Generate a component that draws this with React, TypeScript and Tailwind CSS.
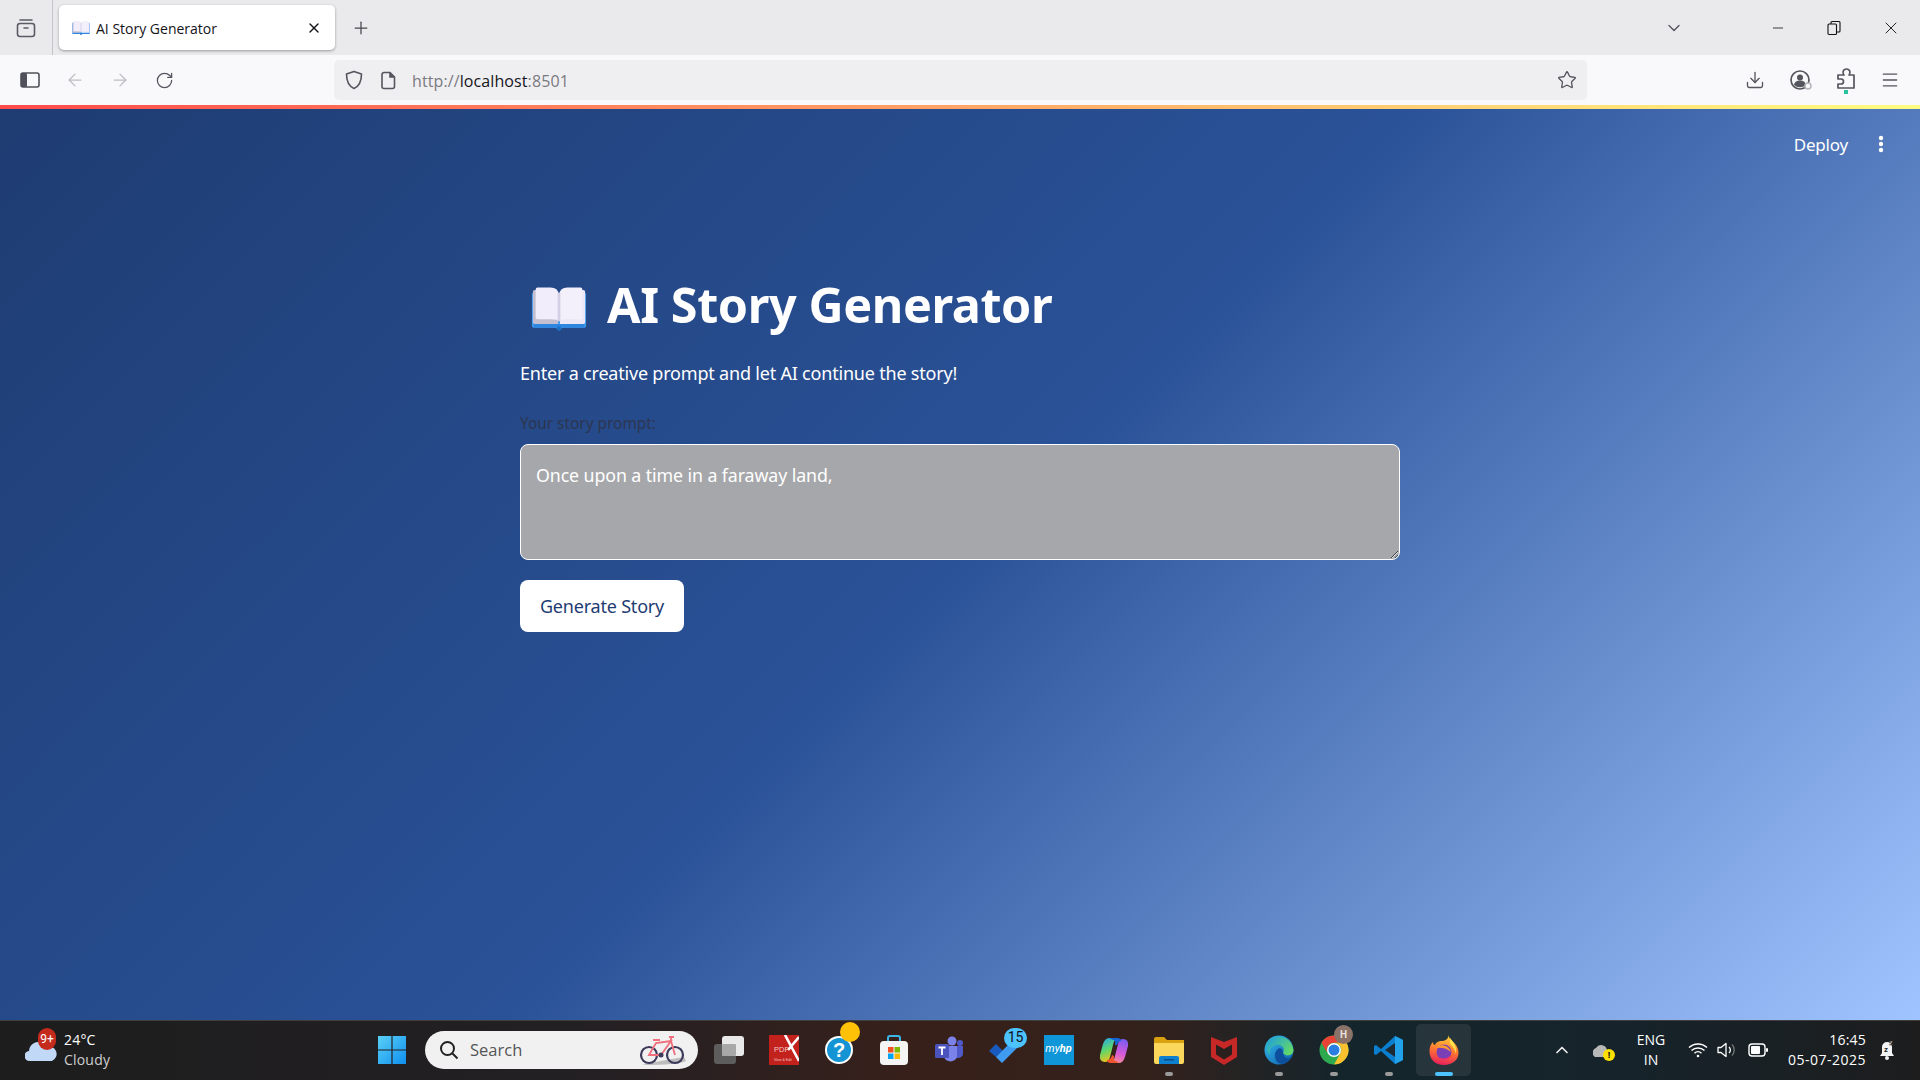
import { ArrowLeft, ArrowRight, ChevronDown, ChevronUp, Download, Minus, Plus, RotateCw, Star, X, Menu } from "lucide-react";

const ui = "font-['Open_Sans','Liberation_Sans',sans-serif]";

function BookEmoji({ size, className }: { size: number; className?: string }) {
  return (
    <svg width={size} height={size} viewBox="0 0 60 60" className={className}>
      <path d="M1 13 H59 V48 a2 2 0 0 1-2 2 H35 l-3 1 a3 3 0 0 1-4 0 l-3-1 H3 a2 2 0 0 1-2-2Z" fill="#3f9bf0" />
      <path d="M3 46 H57 V50 H3Z" fill="#2f86e0" />
      <path d="M3 10 q-1 0-1 2 V44 q0 2 2 2 H29 V14 q-2-5-8-5 H8Z" fill="#c3bfd0" />
      <path d="M57 10 q1 0 1 2 V44 q0 2-2 2 H31 V14 q2-5 8-5 h13Z" fill="#ebe7f6" />
      <path d="M7 7 h14 q8 0 9 8 V43 q-2-2-8-2 H7 q-2 0-2-2 V9 q0-2 2-2Z" fill="#f1edfa" />
      <path d="M53 7 H39 q-8 0-9 8 V43 q2-2 8-2 H53 q2 0 2-2 V9 q0-2-2-2Z" fill="#f3f0fb" />
      <path d="M30 13 V43" stroke="#d5cfe6" strokeWidth="3" />
      <circle cx="30" cy="51" r="2.5" fill="#1f6fc4" />
    </svg>
  );
}

function Tabs() {
  return (
    <div className="h-[55px] bg-[#eaeaed] flex items-center text-[#15141a]">
      <div className="w-[53px] h-full flex items-center justify-center border-r border-[#c4c4c8]">
        <svg width="20" height="20" viewBox="0 0 20 20" fill="none" stroke="#5b5b66" strokeWidth="1.6">
          <rect x="1.5" y="5.5" width="17" height="13" rx="2.5" />
          <path d="M4 2 H16 M8 10 H12" strokeLinecap="round" />
        </svg>
      </div>
      <div className="ml-[6px] w-[276px] h-[45px] bg-white rounded-[5px] shadow-[0_1px_3px_rgba(0,0,0,0.35)] flex items-center pl-[13px] pr-[13px]">
        <BookEmoji size={18} />
        <span className={`ml-[6px] pt-[1px] flex-1 text-[14px] ${ui}`}>AI Story Generator</span>
        <X size={16} strokeWidth={2} />
      </div>
      <div className="w-[52px] flex justify-center">
        <Plus size={20} strokeWidth={1.5} color="#45454d" />
      </div>
      <div className="ml-auto flex items-center">
        <ChevronDown size={20} strokeWidth={1.6} color="#55555e" />
        <div className="w-[86px]" />
        <Minus size={16} strokeWidth={1.2} color="#111" />
        <div className="w-[41px]" />
        <svg width="14" height="16" viewBox="0 0 14 16" fill="none" stroke="#111" strokeWidth="1.1">
          <rect x="1" y="4" width="8.5" height="10.5" rx="1" />
          <path d="M4 4 V2.5 q0-1 1-1 H12 q1 0 1 1 V11 q0 1-1 1 H9.5" />
        </svg>
        <div className="w-[40px]" />
        <X size={20} strokeWidth={1.1} color="#111" />
        <div className="w-[19px]" />
      </div>
    </div>
  );
}

function Toolbar() {
  return (
    <div className="h-[50px] bg-[#f9f9fb] flex items-center">
      <div className="flex items-center w-[334px] pl-[20px]">
        <svg width="20" height="20" viewBox="0 0 20 20" fill="none">
          <rect x="1" y="3" width="18" height="14" rx="2" stroke="#50505a" strokeWidth="1.6" />
          <rect x="1" y="3" width="6" height="14" rx="1.5" fill="#50505a" />
        </svg>
        <ArrowLeft size={20} strokeWidth={1.5} color="#bdbdc2" className="ml-[25px]" />
        <ArrowRight size={20} strokeWidth={1.5} color="#bdbdc2" className="ml-[25px]" />
        <RotateCw size={19} strokeWidth={1.6} color="#55555e" className="ml-[25px]" />
      </div>
      <div className="w-[1253px] h-[40px] bg-[#efeff2] rounded-[5px] flex items-center pl-[11px] pr-[10px]">
        <svg width="18" height="20" viewBox="0 0 18 20" fill="none" stroke="#55555e" strokeWidth="1.6">
          <path d="M9 1.5 L16.5 4 C16.5 11 14.5 16 9 18.5 C3.5 16 1.5 11 1.5 4Z" strokeLinejoin="round" />
        </svg>
        <svg width="15" height="19" viewBox="0 0 15 19" fill="none" stroke="#55555e" strokeWidth="1.6" className="ml-[18px]">
          <path d="M3 1.5 H9 L13.5 6 V15.5 a2 2 0 0 1-2 2 H3 a2 2 0 0 1-2-2 V3.5 a2 2 0 0 1 2-2Z" />
          <path d="M9 1.5 V6 H13.5" fill="#55555e" />
        </svg>
        <span className={`ml-[16px] pt-[2px] flex-1 text-[16px] tracking-[0.1px] text-[#7a7a80] ${ui}`}>
          http://<span className="text-[#15141a]">localhost</span>:8501
        </span>
        <Star size={20} strokeWidth={1.6} color="#55555e" />
      </div>
      <div className="flex-1 flex items-center pl-[158px]">
        <Download size={20} strokeWidth={1.6} color="#55555e" />
        <div className="w-[24px]" />
        <svg width="24" height="24" viewBox="0 0 24 24" fill="none">
          <circle cx="11" cy="12" r="9" stroke="#55555e" strokeWidth="1.7" />
          <circle cx="11" cy="9.5" r="3" fill="#55555e" />
          <path d="M5 17 a6 4.5 0 0 1 12 0 a9 9 0 0 1-12 0Z" fill="#55555e" />
          <circle cx="19" cy="18" r="3" fill="#f9f9fb" stroke="#b5b5ba" strokeWidth="1.5" />
        </svg>
        <div className="w-[23px]" />
        <div className="flex flex-col items-center">
          <svg width="20" height="23" viewBox="0 0 20 23" fill="none" stroke="#55555e" strokeWidth="1.7">
            <path d="M2 9 H8 c-2-2-1-6 2.500-6 c3.500 0 4.500 4 2.500 6 H18 V22 H2 V18 h3 a2.500 2.500 0 0 0 0-5 h-3Z" strokeLinejoin="round" />
          </svg>
          <div className="w-[4px] h-[4px] bg-[#2ac3a2] mt-[1px]" />
        </div>
        <div className="w-[24px]" />
        <Menu size={20} strokeWidth={1.6} color="#55555e" />
      </div>
    </div>
  );
}

function Page() {
  return (
    <div className="relative flex-1 bg-[linear-gradient(135deg,#1e3c72_0%,#2a5298_50%,#a0c4ff_100%)] font-['Noto_Sans',sans-serif]">
      <div className="h-[4px] bg-[linear-gradient(90deg,#ff4b4b,#fffd80)]" />
      <div className="absolute top-[26px] right-[36px] flex items-center text-white">
        <span className="pt-[1px] text-[17px] tracking-[-0.2px]">Deploy</span>
        <svg width="6" height="18" viewBox="0 0 6 18" className="ml-[30px]" fill="#fff">
          <circle cx="3" cy="3" r="2.2" />
          <circle cx="3" cy="9" r="2.2" />
          <circle cx="3" cy="15" r="2.2" />
        </svg>
      </div>
      <div className="mx-auto w-[880px] flex flex-col pt-[162px]">
        <div className="flex items-center h-[68px] pl-[11px]">
          <BookEmoji size={56} className="mt-[7px]" />
          <h1 className="ml-[20px] pb-[2px] text-[48.5px] font-bold text-white tracking-[-0.4px] leading-none">AI Story Generator</h1>
        </div>
        <p className="mt-[19px] text-[18px] text-white leading-[30px] tracking-[-0.2px]">Enter a creative prompt and let AI continue the story!</p>
        <label className="mt-[25px] text-[15.4px] text-[#2c3650] leading-[22px]">Your story prompt:</label>
        <textarea
          readOnly
          defaultValue="Once upon a time in a faraway land,"
          className="mt-[9px] h-[116px] rounded-[8px] border border-white bg-[#a6a7aa] px-[15px] py-[18px] text-[17.8px] leading-[24px] text-white tracking-[-0.1px] outline-none"
        />
        <button className="mt-[20px] w-[164px] h-[52px] bg-white rounded-[8px] text-[18px] text-[#1e3c72] tracking-[-0.2px]">Generate Story</button>
      </div>
    </div>
  );
}

function Pip({ active }: { active?: boolean }) {
  return <div className={active ? "w-[18px] h-[4px] rounded bg-[#4cc2ff]" : "w-[8px] h-[4px] rounded bg-[#9a9a9a]"} />;
}

function Slot({ children, pip, active }: { children: React.ReactNode; pip?: boolean; active?: boolean }) {
  return (
    <div className={`relative w-[55px] h-[52px] flex items-center justify-center rounded-[5px] ${active ? "bg-[#ffffff14]" : ""}`}>
      {children}
      {(pip || active) && (
        <div className="absolute bottom-[0px] left-0 right-0 flex justify-center">
          <Pip active={active} />
        </div>
      )}
    </div>
  );
}

function Badge({ className, children }: { className: string; children?: React.ReactNode }) {
  return <div className={`absolute rounded-full flex items-center justify-center ${className}`}>{children}</div>;
}

function TaskIcons() {
  return (
    <div className="flex items-center">
      <Slot>
        <svg width="32" height="32" viewBox="0 0 32 32">
          <rect x="1" y="10" width="22" height="20" rx="3" fill="#5d5d5d" />
          <rect x="9" y="2" width="22" height="20" rx="3" fill="#e9e9e9" />
          <rect x="9" y="10" width="14" height="12" rx="1" fill="#a8a8a8" />
        </svg>
      </Slot>
      <Slot>
        <svg width="30" height="30" viewBox="0 0 30 30">
          <rect width="30" height="30" fill="#c2211c" />
          <path d="M16 0 L30 26 M30 2 L19 15" stroke="#fff" strokeWidth="2.6" fill="none" />
          <text x="5" y="17" fontSize="7.5" fill="#f2c9c7" fontFamily="Liberation Sans">PDF</text>
          <text x="5" y="26" fontSize="3.5" fill="#f2c9c7" fontFamily="Liberation Sans">View & Edit</text>
        </svg>
      </Slot>
      <Slot>
        <svg width="30" height="30" viewBox="0 0 30 30">
          <circle cx="15" cy="15" r="14" fill="#fff" />
          <circle cx="15" cy="15" r="12" fill="#1494d4" />
          <text x="15" y="22" textAnchor="middle" fontSize="20" fontWeight="700" fill="#fff" fontFamily="Liberation Sans">?</text>
        </svg>
        <Badge className="top-[-2px] left-[29px] w-[20px] h-[20px] bg-[#ffc107]" />
      </Slot>
      <Slot>
        <svg width="30" height="30" viewBox="0 0 30 30">
          <path d="M9 7 V3 q0-2 2-2 H19 q2 0 2 2 V7" stroke="#3cb4e8" strokeWidth="2" fill="none" />
          <rect x="1" y="6" width="28" height="24" rx="4" fill="#f4f4f4" />
          <rect x="9" y="12" width="5.5" height="5.5" fill="#f25022" />
          <rect x="15.5" y="12" width="5.5" height="5.5" fill="#7fba00" />
          <rect x="9" y="18.5" width="5.5" height="5.5" fill="#00a4ef" />
          <rect x="15.5" y="18.5" width="5.5" height="5.5" fill="#ffb900" />
        </svg>
      </Slot>
      <Slot>
        <svg width="30" height="30" viewBox="0 0 30 30">
          <circle cx="18" cy="6" r="4.5" fill="#7b83eb" />
          <circle cx="26" cy="8" r="3" fill="#5059c9" />
          <path d="M21 11 H29 V19 a5 5 0 0 1-8 3Z" fill="#5059c9" />
          <path d="M10 11 H23 V22 a7 7 0 0 1-13 0Z" fill="#7b83eb" />
          <rect x="1" y="9" width="14" height="14" rx="1.5" fill="#4b53bc" />
          <path d="M4.5 12.5 H11.5 M8 12.5 V20" stroke="#fff" strokeWidth="1.8" />
        </svg>
      </Slot>
      <Slot>
        <svg width="32" height="30" viewBox="0 0 32 30">
          <path d="M1 16 L8 9 L15 16 L8 22Z" fill="#185abd" />
          <path d="M8 22 L25 5 L31 11 L14 28 Z" fill="#3f9bf0" />
        </svg>
        <Badge className="top-[4px] left-[28px] w-[23px] h-[20px] bg-[#4cc2ff] text-[14px] text-[#111] font-['Roboto',sans-serif]">15</Badge>
      </Slot>
      <Slot>
        <div className="w-[30px] h-[30px] bg-[#0e96d8] flex items-center justify-center text-white text-[11px] italic font-['Roboto',sans-serif]">
          my<b>hp</b>
        </div>
      </Slot>
      <Slot>
        <svg width="30" height="28" viewBox="0 0 30 28">
          <defs>
            <linearGradient id="cpa" x1="0.2" y1="0" x2="0.5" y2="1">
              <stop offset="0" stopColor="#27a8e8" />
              <stop offset="0.5" stopColor="#5fd66c" />
              <stop offset="1" stopColor="#f5c419" />
            </linearGradient>
            <linearGradient id="cpb" x1="0.6" y1="0" x2="0.4" y2="1">
              <stop offset="0" stopColor="#7a5bf0" />
              <stop offset="0.6" stopColor="#d85ad8" />
              <stop offset="1" stopColor="#f08a9a" />
            </linearGradient>
          </defs>
          <path d="M10 2 H18 Q15 4 14 9 L11 21 Q10 26 6 26 Q0 26 1 19 L4 8 Q6 2 10 2Z" fill="url(#cpa)" />
          <path d="M20 27 H12 Q15 25 16 20 L19 8 Q20 3 24 3 Q30 3 29 10 L26 21 Q24 27 20 27Z" fill="url(#cpb)" />
          <path d="M10 2 H18 Q22 2 22 5 Q19 5 18 9 L16 9 Q17 4 14 4Z" fill="#1565d8" />
          <path d="M20 27 H12 Q8 27 8 24 Q12 24 13 19 L15 20 Q14 25 17 25Z" fill="#f0562d" />
        </svg>
      </Slot>
      <Slot pip>
        <svg width="30" height="28" viewBox="0 0 30 28">
          <path d="M0 3 q0-2 2-2 H10 L13 4 H30 V10 H0Z" fill="#d9a00f" />
          <path d="M0 7 H30 V26 q0 2-2 2 H2 q-2 0-2-2Z" fill="#fbd75b" />
          <path d="M5 28 V22 q0-2 2-2 H23 q2 0 2 2 V28Z" fill="#0f7fd0" />
          <rect x="10" y="23" width="10" height="1.5" fill="#0a4f8a" />
        </svg>
      </Slot>
      <Slot>
        <svg width="26" height="30" viewBox="0 0 26 30">
          <path d="M0 2 L13 7 L26 2 V22 L13 30 L0 22Z" fill="#c62828" />
          <path d="M5 9.500 L13 14 L21 9.500 V19.500 L13 24.500 L5 19.500Z" fill="#2a1f1c" />
        </svg>
      </Slot>
      <Slot pip>
        <svg width="30" height="30" viewBox="0 0 30 30">
          <defs>
            <linearGradient id="eda" x1="0" y1="0" x2="1" y2="1">
              <stop offset="0" stopColor="#35c1f1" />
              <stop offset="1" stopColor="#0c59a4" />
            </linearGradient>
            <linearGradient id="edb" x1="0" y1="0" x2="1" y2="0.6">
              <stop offset="0" stopColor="#1b9de2" />
              <stop offset="1" stopColor="#62d66b" />
            </linearGradient>
          </defs>
          <circle cx="15" cy="15" r="14.5" fill="url(#eda)" />
          <path d="M2 9 C7 -1 27 -2 29.500 15 C29.500 21 22 22 19 18 C22 13 17 9 12 10 C7 11 5 15 6 20 C3 17 2 12 2 9Z" fill="url(#edb)" />
          <path d="M13 15 C15 12 19 13 19 18 C20 24 25 25 28 21 C24 30 15 31 12 25 C10 21 11 17 13 15Z" fill="#0d4f9c" />
        </svg>
      </Slot>
      <Slot pip>
        <svg width="30" height="30" viewBox="0 0 30 30">
          <circle cx="15" cy="15" r="14.5" fill="#2da94f" />
          <path d="M2.440 7.750 A14.500 14.500 0 0 1 27.560 7.750 H15 A7.250 7.250 0 0 0 8.720 18.620Z" fill="#ea4335" />
          <path d="M27.560 7.750 A14.500 14.500 0 0 1 15 29.500 L21.280 18.620 A7.250 7.250 0 0 0 15 7.750Z" fill="#fbc02d" />
          <circle cx="15" cy="15" r="7" fill="#fff" />
          <circle cx="15" cy="15" r="5.500" fill="#2a7de1" />
        </svg>
        <Badge className="top-[1px] left-[28px] w-[19px] h-[19px] bg-[#8a7268] text-[10px] font-bold text-[#e8e0dc] font-['Roboto',sans-serif]">H</Badge>
      </Slot>
      <Slot pip>
        <svg width="30" height="30" viewBox="0 0 30 30">
          <path d="M21 1 L29 5 V25 L21 29 L7 16 L2 20 L0 19 V11 L2 10 L7 14Z" fill="#0a7fd0" />
          <path d="M21 1 L29 5 V25 L21 29Z" fill="#22a2ea" />
          <path d="M21 8 L11 15 L21 22Z" fill="#1d2a33" />
        </svg>
      </Slot>
      <Slot active>
        <svg width="30" height="32" viewBox="0 0 30 32">
          <defs>
            <linearGradient id="ffa" x1="0.6" y1="0" x2="0.4" y2="1">
              <stop offset="0" stopColor="#ffd43b" />
              <stop offset="0.5" stopColor="#ff7a2f" />
              <stop offset="1" stopColor="#e8205c" />
            </linearGradient>
          </defs>
          <path d="M19 1 C20 6 29 9 29.500 18 C30 26 23 31 15 31 C6 31 0 25 0.500 16 C1 12 2 10 4 8 C4 10 5 11 6 11 C7 8 10 7 12 7 C16 7 20 5 19 1Z" fill="url(#ffa)" />
          <path d="M21 4 C24 8 28 12 27 20 C26 16 24 12 21 10Z" fill="#ffe14d" />
          <circle cx="15" cy="18" r="7.500" fill="#7b3fb5" />
          <path d="M7 14 C11 9 20 11 22 18 C18 14 12 13 7 14Z" fill="#ff9a2f" />
          <path d="M8 22 C11 25 17 26 22 21 C20 28 10 28 8 22Z" fill="#f0336a" />
        </svg>
      </Slot>
    </div>
  );
}

function Tray() {
  return (
    <div className="flex items-center text-white h-full">
      <ChevronUp size={20} strokeWidth={2} color="#eee" />
      <div className="relative w-[20px] h-[18px] ml-[21px]">
        <svg width="20" height="18" viewBox="0 0 20 18">
          <path d="M2 16 a5 5 0 0 1 1-9 a6 6 0 0 1 11 2 a4 4 0 0 1-1 7Z" fill="#b8b8b8" />
        </svg>
        <div className="absolute -right-[2px] -bottom-[2px] w-[12px] h-[12px] rounded-full bg-[#fce100] text-[#111] text-[9px] font-bold flex items-center justify-center">!</div>
      </div>
      <div className={`ml-[21px] pt-[1px] w-[34px] text-center text-[14px] leading-[20px] ${ui}`}>
        <div>ENG</div>
        <div>IN</div>
      </div>
      <svg width="20" height="16" viewBox="0 0 20 16" fill="none" stroke="#fff" strokeWidth="1.5" className="ml-[20px]">
        <path d="M1 5.500 a13 13 0 0 1 18 0 M3.500 8.500 a9.500 9.500 0 0 1 13 0 M6.500 11.200 a5 5 0 0 1 7 0" />
        <circle cx="10" cy="14" r="1.300" fill="#fff" stroke="none" />
      </svg>
      <svg width="20" height="18" viewBox="0 0 20 18" fill="none" stroke="#fff" strokeWidth="1.3" className="ml-[9px]">
        <path d="M1 6.500 H4 L9 2.500 V15.500 L4 11.500 H1Z" strokeLinejoin="round" />
        <path d="M12 6 a4 4 0 0 1 0 6" />
        <path d="M15 3.500 a8 8 0 0 1 0 11" stroke="#777" />
      </svg>
      <svg width="20" height="14" viewBox="0 0 20 14" fill="none" className="ml-[11px]">
        <rect x="1" y="1" width="16" height="12" rx="3" stroke="#fff" strokeWidth="1.4" />
        <rect x="3" y="3" width="9" height="8" rx="1" fill="#fff" />
        <rect x="18" y="5" width="2" height="4" rx="1" fill="#fff" />
      </svg>
      <div className={`ml-[14px] w-[84px] text-right text-[14px] leading-[20px] ${ui}`}>
        <div className="tracking-[0.2px]">16:45</div>
        <div className="tracking-[0.5px]">05-07-2025</div>
      </div>
      <svg width="18" height="22" viewBox="0 0 18 22" className="ml-[12px]" fill="#f4f4f4">
        <path d="M9 3 a5 5 0 0 1 5 5 V14 L16 17 H2 L4 14 V8 a5 5 0 0 1 5-5Z" />
        <circle cx="9" cy="19" r="2" />
        <text x="6" y="13" fontSize="8" fontWeight="700" fill="#222" fontFamily="Liberation Sans">z</text>
        <text x="11" y="6" fontSize="7" fontWeight="700" fill="#f4f4f4" stroke="#222" strokeWidth="0.3" fontFamily="Liberation Sans">z</text>
      </svg>
    </div>
  );
}

function Taskbar() {
  return (
    <div className="h-[60px] pb-[2px] border-t border-[#3f3f3f] bg-[linear-gradient(90deg,#1d1d1d_0%,#232024_30%,#38201a_48%,#33211c_60%,#14252c_70%,#16232a_85%,#1d1d1e_100%)] flex items-center">
      <div className="w-[378px] flex items-center pl-[25px]">
        <div className="relative w-[32px] h-[24px]">
          <svg width="32" height="24" viewBox="0 0 32 24">
            <path d="M5 23 a5 5 0 0 1-1-10 a9 9 0 0 1 17-4 a7 7 0 0 1 6 14Z" fill="#c2d8f7" />
          </svg>
          <Badge className="top-[-10px] left-[13px] w-[18px] h-[22px] bg-[#c42b1c] text-white text-[12px] font-['Roboto',sans-serif]">9+</Badge>
        </div>
        <div className={`ml-[7px] text-[14px] leading-[20px] tracking-[0.2px] text-white ${ui}`}>
          <div>24°C</div>
          <div className="text-[#cfcfcf]">Cloudy</div>
        </div>
      </div>
      <svg width="28" height="28" viewBox="0 0 28 28">
        <defs>
          <linearGradient id="win" x1="0" y1="0" x2="1" y2="1">
            <stop offset="0" stopColor="#5ad0f5" />
            <stop offset="1" stopColor="#0f8ff0" />
          </linearGradient>
        </defs>
        <path d="M0 0 H13.400 V13.400 H0Z M14.600 0 H28 V13.400 H14.600Z M0 14.600 H13.400 V28 H0Z M14.600 14.600 H28 V28 H14.600Z" fill="url(#win)" />
      </svg>
      <div className="ml-[19px] w-[273px] h-[38px] rounded-full bg-[#f1f1f1] flex items-center pl-[14px] pr-[12px] text-[#555]">
        <svg width="20" height="20" viewBox="0 0 20 20" fill="none" stroke="#222" strokeWidth="2">
          <circle cx="8.500" cy="8.500" r="6.500" />
          <path d="M13.500 13.500 L18.500 18.500" />
        </svg>
        <span className={`ml-[11px] pt-[1px] flex-1 text-[16.5px] ${ui}`}>Search</span>
        <svg width="48" height="32" viewBox="0 0 48 32" fill="none">
          <path d="M4 31 Q26 26 46 23 L48 27 Q40 31 4 31Z" fill="#bdbdbd" />
          <circle cx="11" cy="21" r="8" stroke="#3c3a5a" strokeWidth="2.200" />
          <circle cx="37" cy="21" r="8" stroke="#3c3a5a" strokeWidth="2.200" />
          <path d="M11 21 L18 9 L33 7 L23 21 Z M33 7 L37 21 M15 6 H22 M31 3 H36 M33 3 V7" stroke="#ef6f7c" strokeWidth="1.800" />
          <circle cx="23" cy="21" r="2.500" fill="#3c3a5a" />
        </svg>
      </div>
      <div className="ml-[3px]">
        <TaskIcons />
      </div>
      <div className="ml-auto pr-[24px] h-full">
        <Tray />
      </div>
    </div>
  );
}

export default function App() {
  return (
    <div className="w-[1920px] h-[1080px] flex flex-col overflow-hidden">
      <Tabs />
      <Toolbar />
      <Page />
      <Taskbar />
    </div>
  );
}
